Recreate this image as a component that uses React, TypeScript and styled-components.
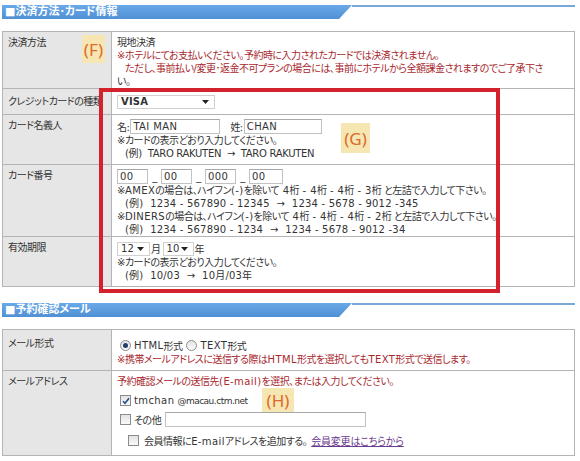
import React from "react";
import styled, { createGlobalStyle } from "styled-components";

const GlobalStyle = createGlobalStyle`
  body {
    margin: 0;
    background: #fff;
    font-family: "DejaVu Sans", "Noto Sans CJK JP", sans-serif;
    font-size: 10px;
    letter-spacing: -0.5px;
    color: #333;
  }
`;

const Page = styled.div`
  position: relative;
  width: 573px;
  padding: 5px 0 0 2px;
  font-feature-settings: "palt";
`;

/* 見出しバー */
const SectionHead = styled.div<{ $after: number }>`
  display: flex;
  align-items: flex-start;
  height: 14px;
  margin-bottom: ${(p) => p.$after}px;
`;

const Tab = styled.div`
  width: 350px;
  height: 14px;
  box-sizing: border-box;
  padding-left: 3px;
  background: linear-gradient(#6aa9e8, #4f90d4);
  clip-path: polygon(0 0, 100% 0, calc(100% - 13px) 100%, 0 100%);
  color: #fff;
  font-weight: bold;
  font-size: 11px;
  letter-spacing: 0;
  line-height: 14px;
  white-space: nowrap;
`;

const Rule = styled.div`
  flex: 1;
  height: 2px;
  background: #78a8d8;
`;

const FormTable = styled.table`
  width: 573px;
  table-layout: fixed;
  border-collapse: collapse;
  margin-bottom: 16px;
`;

const Row = styled.tr<{ $h: number; $pad?: number; $middle?: boolean }>`
  height: ${(p) => p.$h}px;

  & > th,
  & > td {
    border: 1px solid #b4b4b4;
    vertical-align: ${(p) => (p.$middle ? "middle" : "top")};
    padding: ${(p) => p.$pad ?? 4}px 5px 0;
  }
`;

const Label = styled.th`
  width: 98px;
  background: #e6e6e6;
  text-align: left;
  font-weight: normal;
  line-height: 13px;
  white-space: nowrap;
  overflow: hidden;
`;

const Cell = styled.td`
  background: #fff;
`;

const Line = styled.div<{ $red?: boolean; $indent?: boolean; $spacing?: number }>`
  line-height: 13px;
  white-space: pre;
  color: ${(p) => (p.$red ? "#a8282d" : "#333")};
  padding-left: ${(p) => (p.$indent ? 8 : 0)}px;
  letter-spacing: ${(p) => (p.$spacing !== undefined ? `${p.$spacing}px` : "inherit")};
`;

/* 英数字の部分 */
const En = styled.span`
  letter-spacing: 0.4px;
`;

const Controls = styled.div<{ $h?: number; $top?: number }>`
  display: flex;
  align-items: center;
  height: ${(p) => p.$h ?? 15}px;
  margin-top: ${(p) => p.$top ?? 0}px;
  white-space: nowrap;
`;

const TextBox = styled.input<{ $w: number; $gap?: number }>`
  width: ${(p) => p.$w}px;
  height: 15px;
  box-sizing: border-box;
  margin: 0 0 0 ${(p) => p.$gap ?? 0}px;
  padding: 0 2px;
  border: 1px solid #c2c2c2;
  border-top-color: #a8a8a8;
  font-family: "DejaVu Sans", "Noto Sans CJK JP", sans-serif;
  font-size: 10px;
  letter-spacing: 0.4px;
  color: #333;
  background: #fff;
  outline: none;
`;

const Dash = styled.span`
  width: 13px;
  text-align: center;
  line-height: 15px;
  align-self: flex-end;
`;

const FieldLabel = styled.span<{ $gap?: number }>`
  margin-left: ${(p) => p.$gap ?? 0}px;
  padding-right: 1px;
`;

const SelectBox = styled.div<{ $w: number; $bold?: boolean }>`
  display: flex;
  align-items: center;
  justify-content: space-between;
  width: ${(p) => p.$w}px;
  height: 14px;
  box-sizing: border-box;
  padding: 0 5px 0 3px;
  border: 1px solid #d0d0d0;
  background: #fff;
  font-weight: ${(p) => (p.$bold ? "bold" : "normal")};
  letter-spacing: 0.2px;
`;

const Caret = () => (
  <svg width="7" height="4" viewBox="0 0 7 4">
    <path d="M0 0h7L3.5 4z" fill="#222" />
  </svg>
);

const Select = ({ value, w, bold }: { value: string; w: number; bold?: boolean }) => (
  <SelectBox $w={w} $bold={bold}>
    <span>{value}</span>
    <Caret />
  </SelectBox>
);

const Unit = styled.span`
  margin: 0 2px 0 1px;
`;

/* ラジオ・チェック */
const RadioMark = styled.span<{ $on?: boolean }>`
  position: relative;
  display: inline-block;
  width: 9px;
  height: 9px;
  border: 1px solid #8c8c8c;
  border-radius: 50%;
  background: linear-gradient(#e4e4e4, #fafafa);
  margin-right: 3px;

  &::after {
    content: "";
    position: absolute;
    left: 2px;
    top: 2px;
    width: 5px;
    height: 5px;
    border-radius: 50%;
    background: ${(p) => (p.$on ? "#1d3f6e" : "transparent")};
  }
`;

const CheckMark = styled.span`
  display: inline-flex;
  align-items: center;
  justify-content: center;
  width: 9px;
  height: 9px;
  border: 1px solid #8c8c8c;
  background: linear-gradient(#e2e2e2, #fafafa);
  margin-right: 3px;
`;

const Check = ({ on }: { on?: boolean }) => (
  <CheckMark>
    {on && (
      <svg width="8" height="8" viewBox="0 0 8 8">
        <path d="M1 4.2l2 2L7 1.2" stroke="#234f8a" strokeWidth="1.6" fill="none" />
      </svg>
    )}
  </CheckMark>
);

const Option = styled.span<{ $gap?: number }>`
  display: inline-flex;
  align-items: center;
  margin-left: ${(p) => p.$gap ?? 0}px;
`;

const Small = styled.span`
  font-size: 9px;
  margin-left: 3px;
`;

const Link = styled.a`
  color: #6b3a8c;
  text-decoration: underline;
  margin-left: 3px;
  letter-spacing: -0.2px;
`;

/* 注釈(F)(G)(H)と赤枠 */
const Frame = styled.div`
  position: absolute;
  left: 99px;
  top: 88px;
  width: 401px;
  height: 205px;
  box-sizing: border-box;
  border: 4px solid #d3222b;
  pointer-events: none;
`;

const Tag = styled.div<{ $x: number; $y: number; $w: number; $h: number }>`
  position: absolute;
  left: ${(p) => p.$x}px;
  top: ${(p) => p.$y}px;
  width: ${(p) => p.$w}px;
  height: ${(p) => p.$h}px;
  display: flex;
  align-items: center;
  justify-content: center;
  background: #f6e6b2;
  color: #dc6a2c;
  font-family: "Noto Sans", sans-serif;
  font-size: 17px;
  letter-spacing: 0;
`;

export default function App() {
  return (
    <>
      <GlobalStyle />
      <Page>
        <SectionHead $after={12}>
          <Tab>■決済方法･カード情報</Tab>
          <Rule />
        </SectionHead>

        <FormTable>
          <tbody>
            <Row $h={56}>
              <Label>決済方法</Label>
              <Cell>
                <Line>現地決済</Line>
                <Line $red>※ホテルにてお支払いください。予約時に入力されたカードでは決済されません。</Line>
                <Line $red $indent>
                  ただし、事前払い/変更･返金不可プランの場合には、事前にホテルから全額課金されますのでご了承下さ
                </Line>
                <Line>い。</Line>
              </Cell>
            </Row>
            <Row $h={26} $pad={0} $middle>
              <Label>クレジットカードの種類</Label>
              <Cell>
                <Controls>
                  <Select value="VISA" w={98} bold />
                </Controls>
              </Cell>
            </Row>
            <Row $h={50}>
              <Label>カード名義人</Label>
              <Cell>
                <Controls>
                  <FieldLabel>名:</FieldLabel>
                  <TextBox $w={90} defaultValue="TAI MAN" />
                  <FieldLabel $gap={10}>姓:</FieldLabel>
                  <TextBox $w={78} defaultValue="CHAN" />
                </Controls>
                <Line>※カードの表示どおり入力してください。</Line>
                <Line $indent $spacing={-0.3}>{"(例)  TARO RAKUTEN  →  TARO RAKUTEN"}</Line>
              </Cell>
            </Row>
            <Row $h={72}>
              <Label>カード番号</Label>
              <Cell>
                <Controls>
                  <TextBox $w={31} defaultValue="00" />
                  <Dash>_</Dash>
                  <TextBox $w={31} defaultValue="00" />
                  <Dash>_</Dash>
                  <TextBox $w={31} defaultValue="000" />
                  <Dash>_</Dash>
                  <TextBox $w={34} defaultValue="00" />
                </Controls>
                <Line>
                  ※<En>AMEX</En>の場合は、ハイフン<En>(-)</En>を除いて<En> 4</En>桁<En> - 4</En>桁<En> - 4</En>桁
                  <En> - 3</En>桁 と左詰で入力して下さい。
                </Line>
                <Line $indent $spacing={0.2}>{"(例)  1234 - 567890 - 12345  →  1234 - 5678 - 9012 -345"}</Line>
                <Line>
                  ※<En>DINERS</En>の場合は、ハイフン<En>(-)</En>を除いて<En> 4</En>桁<En> - 4</En>桁<En> - 4</En>桁
                  <En> - 2</En>桁 と左詰で入力して下さい。
                </Line>
                <Line $indent $spacing={0.2}>{"(例)  1234 - 567890 - 1234  →  1234 - 5678 - 9012 -34"}</Line>
              </Cell>
            </Row>
            <Row $h={50}>
              <Label>有効期限</Label>
              <Cell>
                <Controls>
                  <Select value="12" w={33} />
                  <Unit>月</Unit>
                  <Select value="10" w={31} />
                  <Unit>年</Unit>
                </Controls>
                <Line>※カードの表示どおり入力してください。</Line>
                <Line $indent $spacing={0.2}>{"(例)  10/03  →  10月/03年"}</Line>
              </Cell>
            </Row>
          </tbody>
        </FormTable>

        <SectionHead $after={12}>
          <Tab>■予約確認メール</Tab>
          <Rule />
        </SectionHead>

        <FormTable>
          <tbody>
            <Row $h={41} $pad={7}>
              <Label>メール形式</Label>
              <Cell>
                <Controls $h={16}>
                  <Option $gap={3}>
                    <RadioMark $on />
                    <En>HTML</En>形式
                  </Option>
                  <Option $gap={4}>
                    <RadioMark />
                    <En>TEXT</En>形式
                  </Option>
                </Controls>
                <Line $red>
                  ※携帯メールアドレスに送信する際は<En>HTML</En>形式を選択しても<En>TEXT</En>形式で送信します。
                </Line>
              </Cell>
            </Row>
            <Row $h={85}>
              <Label>メールアドレス</Label>
              <Cell>
                <Line $red>
                  予約確認メールの送信先<En>(E-mail)</En>を選択、または入力してください。
                </Line>
                <Controls $h={19} $top={3}>
                  <Option $gap={3}>
                    <Check on />
                    <En>tmchan</En>
                    <Small>@macau.ctm.net</Small>
                  </Option>
                </Controls>
                <Controls $h={19}>
                  <Option $gap={3}>
                    <Check />
                    その他
                  </Option>
                  <TextBox $w={201} $gap={4} />
                </Controls>
                <Controls $h={19} $top={2}>
                  <Option $gap={11}>
                    <Check />
                    <FieldLabel $gap={2}>
                      会員情報に<En>E-mail</En>アドレスを追加する。
                    </FieldLabel>
                  </Option>
                  <Link href="#">会員変更はこちらから</Link>
                </Controls>
              </Cell>
            </Row>
          </tbody>
        </FormTable>

        <Frame />
        <Tag $x={82} $y={35} $w={23} $h={28}>(F)</Tag>
        <Tag $x={341} $y={123} $w={29} $h={30}>(G)</Tag>
        <Tag $x={262} $y={388} $w={32} $h={24}>(H)</Tag>
      </Page>
    </>
  );
}
